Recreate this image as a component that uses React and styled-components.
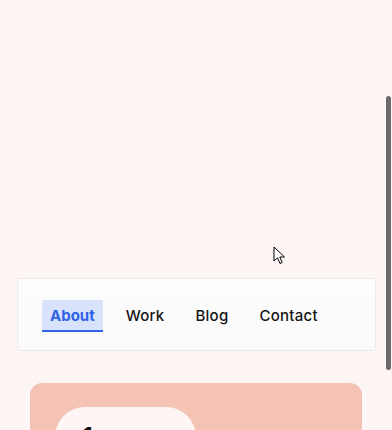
import React from "react";
import styled, { createGlobalStyle } from "styled-components";

const Global = createGlobalStyle`
  html, body { margin: 0; padding: 0; }
  body {
    background: #fdf6f4;
    font-family: "Inter", "Lato", "Liberation Sans", sans-serif;
    overflow: hidden;
    height: 430px;
  }
`;

const Page = styled.div`
  display: flex;
  flex-direction: column;
  padding-top: 278px;
`;

const NavCard = styled.nav`
  margin: 0 16px 0 17px;
  height: 73px;
  box-sizing: border-box;
  border: 1px solid #eeeaea;
  border-radius: 2px;
  background: linear-gradient(180deg, #fefdfd 0%, #fbfafb 100%);
  display: flex;
  align-items: flex-start;
  padding: 21px 24px 0 24px;
  gap: 15px;
`;

const Tab = styled.a`
  display: block;
  padding: 5px 8px 4px;
  font-size: 15px;
  line-height: 21px;
  letter-spacing: ${(p) => (p.$active ? "0" : "0.25px")};
  font-weight: ${(p) => (p.$active ? 700 : 500)};
  color: ${(p) => (p.$active ? "#2f62e6" : "#151515")};
  background: ${(p) => (p.$active ? "#d9e2fb" : "transparent")};
  border-bottom: 2px solid ${(p) => (p.$active ? "#2f64e8" : "transparent")};
  border-radius: 2px 2px 0 0;
  text-decoration: none;
`;

const Feature = styled.section`
  margin: 32px 30px 0;
  height: 200px;
  background: #f5c3b3;
  border-radius: 12px;
  padding: 24px 25px;
  box-sizing: border-box;
`;

const Pill = styled.div`
  width: 141px;
  height: 120px;
  background: #fdf6f4;
  border-radius: 30px;
  padding: 15px 28px;
  box-sizing: border-box;
  font-size: 22px;
  font-weight: 700;
  color: #111;
`;

const Scrollbar = styled.div`
  position: fixed;
  right: 1px;
  top: 96px;
  width: 5px;
  height: 274px;
  border-radius: 3px;
  background: #6b6a6a;
`;

const Cursor = styled.svg`
  position: fixed;
  left: 273px;
  top: 246px;
`;

export default function App() {
  return (
    <>
      <Global />
      <Page>
        <NavCard>
          <Tab $active href="#">About</Tab>
          <Tab href="#">Work</Tab>
          <Tab href="#">Blog</Tab>
          <Tab href="#">Contact</Tab>
        </NavCard>
        <Feature>
          <Pill>1</Pill>
        </Feature>
      </Page>
      <Scrollbar />
      <Cursor width="13" height="19" viewBox="0 0 13 19">
        <path d="M1 1 L1 15 L4.5 11.8 L7 17.5 L9.2 16.5 L6.8 11 L11.5 11 Z" fill="#fff" stroke="#000" strokeWidth="1" strokeLinejoin="round" />
      </Cursor>
    </>
  );
}
